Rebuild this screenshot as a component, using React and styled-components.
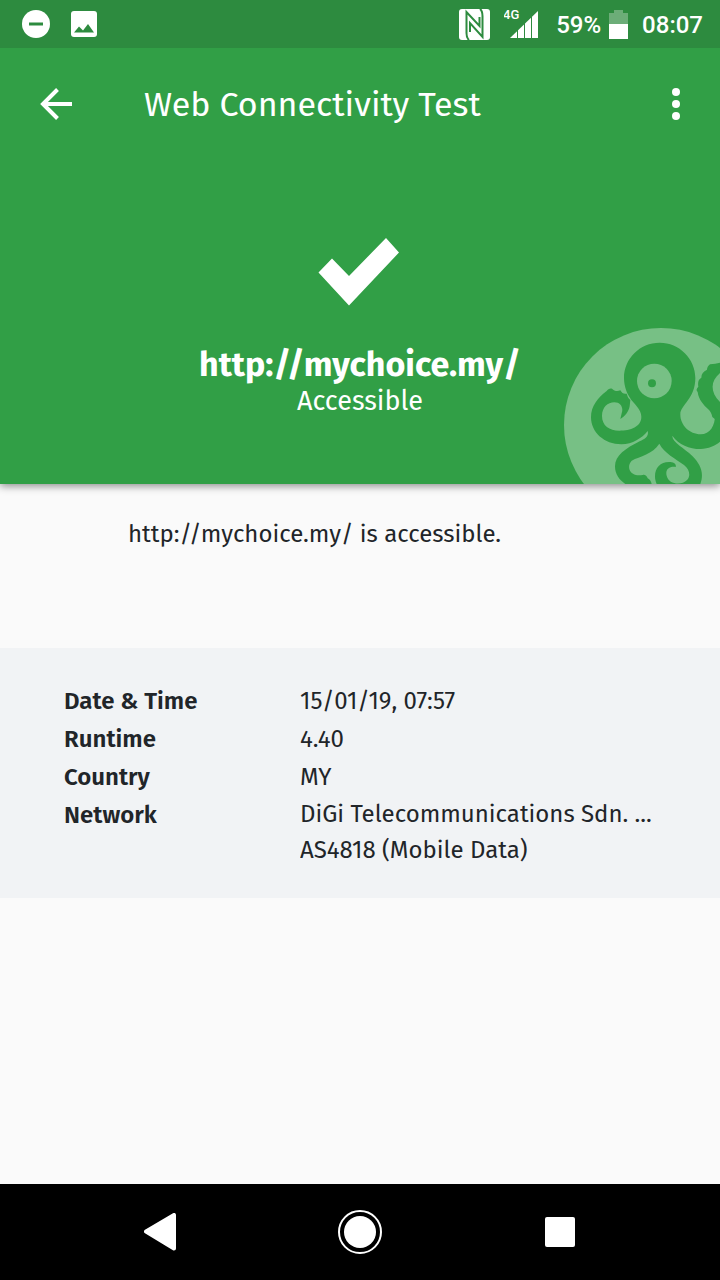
import React from 'react';
import styled, { createGlobalStyle } from 'styled-components';

const fira = "'Fira Sans', 'Noto Sans CJK SC', 'Noto Sans', sans-serif";

const GlobalStyle = createGlobalStyle`
  * { box-sizing: border-box; }
  body { margin: 0; background: #fafafa; }
`;

const Screen = styled.div`
  min-height: 100vh;
  display: flex;
  flex-direction: column;
  background: #fafafa;
  color: #212529;
  font-family: ${fira};
`;

const StatusBar = styled.div`
  position: relative;
  z-index: 1;
  height: 48px;
  padding: 0 17px 0 20px;
  display: flex;
  align-items: center;
  justify-content: space-between;
  background: #2d8b3f;
  color: #fff;
  font: 500 24px/32px Roboto, sans-serif;
`;

const StatusGroup = styled.div`
  display: flex;
  align-items: center;
  gap: ${({ $gap }) => $gap}px;
`;

const StatusText = styled.span`
  padding-top: 2px;
`;

const Signal = styled.svg`
  font: 500 13px Roboto, sans-serif;
`;

const Hero = styled.header`
  position: relative;
  overflow: hidden;
  height: 436px;
  background: #319f46;
  color: #fff;
`;

const HeroShadow = styled.div`
  box-shadow: 0 2px 8px rgba(0, 0, 0, 0.45);
`;

const Toolbar = styled.div`
  height: 112px;
  padding: 0 20px 0 32px;
  display: flex;
  align-items: center;
`;

const IconButton = styled.button`
  display: flex;
  align-items: center;
  justify-content: center;
  width: 48px;
  height: 48px;
  padding: 0;
  border: 0;
  background: none;
  color: inherit;
`;

const Title = styled.h1`
  flex: 1;
  margin: 0 0 0 64px;
  padding-top: 2px;
  font-size: 34px;
  line-height: 48px;
  font-weight: 400;
`;

const Result = styled.div`
  padding-top: 72px;
  display: flex;
  flex-direction: column;
  align-items: center;
`;

const ResultUrl = styled.div`
  margin-top: 39px;
  font-size: 34px;
  line-height: 40px;
  font-weight: 700;
`;

const ResultState = styled.div`
  font-size: 27px;
  line-height: 32px;
`;

const Mascot = styled.svg`
  position: absolute;
  right: 0;
  bottom: 0;
`;

const Summary = styled.p`
  margin: 0;
  height: 164px;
  padding: 32px 128px 0;
  font-size: 24px;
  line-height: 36px;
`;

const Details = styled.dl`
  margin: 0;
  padding: 34px 64px 30px;
  background: #f1f3f5;
  font-size: 24px;
  line-height: 38px;
`;

const DetailRow = styled.div`
  display: grid;
  grid-template-columns: 236px minmax(0, 1fr);
`;

const DetailLabel = styled.dt`
  font-weight: 600;
`;

const DetailValue = styled.dd`
  margin: 0;
  line-height: ${({ $compact }) => ($compact ? 36 : 38)}px;
`;

const DetailLine = styled.div`
  overflow: hidden;
  white-space: nowrap;
  text-overflow: ellipsis;
`;

const NavBar = styled.nav`
  margin-top: auto;
  height: 96px;
  padding: 0 60px;
  display: grid;
  grid-template-columns: repeat(3, 1fr);
  align-items: center;
  justify-items: center;
  background: #000;
  color: #fff;
`;

const Octopus = () => (
  <Mascot width="156" height="156" viewBox="72 54 468 468" aria-hidden="true">
    <circle cx="363" cy="345" r="291" fill="#77c085" />
    <g fill="#319f46">
      <path d="M359 98C299 98 252 146 252 204C252 231 262 256 280 277C295 294 304 305 304 321C304 350 272 362 238 362C208 362 186 347 186 318C186 292 203 277 223 277C243 277 251 294 245 310L241 327C256 318 266 305 269 289L271 270C265 265 263 260 260 251C252 253 246 250 241 241C231 245 223 243 216 236C209 234 204 238 200 243C174 263 153 288 153 322C153 367 193 403 244 403C278 402 305 385 323 363C327 377 317 386 299 394C257 415 225 437 225 469C225 493 238 510 256 522H335C333 514 330 508 323 505C320 498 315 493 308 495C297 497 286 496 279 491C264 483 264 463 275 452C300 438 338 433 358 401C373 430 407 446 432 465C450 479 452 499 441 510C425 527 386 524 380 497C375 479 388 468 407 471C410 462 401 456 387 456C361 456 345 473 345 499C345 508 347 515 350 522H481C493 489 482 463 457 438C432 413 396 397 397 377C417 404 447 417 482 417C505 416 526 407 540 395V326L525 308C527 344 512 373 482 373C448 373 420 345 421 312C422 285 466 266 466 204C466 146 418 98 359 98Z" />
      <path d="M540 158C530 161 522 161 510 163C504 168 501 173 501 179C490 184 484 191 484 203C476 208 473 215 475 230C469 236 468 241 473 246C476 270 492 286 504 297C512 303 515 312 517 321L540 340V276C510 246 511 213 540 189Z" />
    </g>
    <circle cx="343" cy="213" r="52" fill="#77c085" />
    <circle cx="336" cy="220" r="12" fill="#319f46" />
  </Mascot>
);

const details = [
  { label: 'Date & Time', lines: ['15/01/19, 07:57'] },
  { label: 'Runtime', lines: ['4.40'] },
  { label: 'Country', lines: ['MY'] },
  { label: 'Network', lines: ['DiGi Telecommunications Sdn. ...', 'AS4818 (Mobile Data)'] },
];

export default function App() {
  return (
    <Screen>
      <GlobalStyle />
      <StatusBar>
        <StatusGroup $gap={16}>
          <svg width="32" height="32" viewBox="0 0 32 32" aria-hidden="true">
            <circle cx="16" cy="16" r="14" fill="#fff" />
            <path d="M9 14.5h14v3H9z" fill="#2d8b3f" />
          </svg>
          <svg width="32" height="32" viewBox="0 0 32 32" aria-hidden="true">
            <rect x="3" y="3" width="26" height="26" rx="3" fill="#fff" />
            <path d="M6 24.500l5-6 4 4 5-6.500 6 8.500z" fill="#2d8b3f" />
          </svg>
        </StatusGroup>
        <StatusGroup $gap={14}>
          <svg width="31" height="32" viewBox="0 0 31 32" aria-hidden="true">
            <rect y="1" width="31" height="31" rx="3" fill="#fff" />
            <path d="M10 32C7.500 30 7.500 28 7.500 25V4L20.500 18V9M21 1C23.500 3 23.500 5 23.500 8V29L11 15V24" fill="none" stroke="#2d8b3f" strokeWidth="2" />
          </svg>
          <Signal width="38" height="32" viewBox="0 0 38 32" aria-hidden="true">
            <path d="M6 30L34 3V30z" fill="#fff" />
            <path d="M13.500 20V30M20.500 14V30M27.500 8V30" stroke="#2d8b3f" strokeWidth="1" />
            <text x="-1" y="11" fill="#fff">4G</text>
          </Signal>
          <StatusGroup $gap={8}>
            <StatusText>59%</StatusText>
            <svg width="19" height="29" viewBox="0 0 19 29" aria-hidden="true">
              <path d="M0 14V3h5V0h9v3h5v11z" fill="#6cad78" />
              <path d="M0 14h19v15H0z" fill="#fff" />
            </svg>
          </StatusGroup>
          <StatusText>08:07</StatusText>
        </StatusGroup>
      </StatusBar>
      <HeroShadow>
        <Hero>
          <Octopus />
          <Toolbar>
            <IconButton aria-label="Back">
              <svg width="32" height="32" viewBox="0 0 32 32" aria-hidden="true">
                <path d="M32 16H3M17.500 1.500L3 16l14.500 14.500" fill="none" stroke="#fff" strokeWidth="4" />
              </svg>
            </IconButton>
            <Title>Web Connectivity Test</Title>
            <IconButton aria-label="More options">
              <svg width="8" height="32" viewBox="0 0 8 32" fill="#fff" aria-hidden="true">
                <circle cx="4" cy="4" r="4" />
                <circle cx="4" cy="16" r="4" />
                <circle cx="4" cy="28" r="4" />
              </svg>
            </IconButton>
          </Toolbar>
          <Result>
            <svg width="84" height="74" viewBox="0 0 84 74" aria-hidden="true">
              <path d="M0.500 40.500L14 26.500L31 44L68 6L81 20.500L31 73.500z" fill="#fff" />
            </svg>
            <ResultUrl>http://mychoice.my/</ResultUrl>
            <ResultState>Accessible</ResultState>
          </Result>
        </Hero>
      </HeroShadow>
      <Summary>http://mychoice.my/ is accessible.</Summary>
      <Details>
        {details.map(({ label, lines }) => (
          <DetailRow key={label}>
            <DetailLabel>{label}</DetailLabel>
            <DetailValue $compact={lines.length > 1}>
              {lines.map((line) => (
                <DetailLine key={line}>{line}</DetailLine>
              ))}
            </DetailValue>
          </DetailRow>
        ))}
      </Details>
      <NavBar>
        <IconButton aria-label="Back">
          <svg width="32" height="38" viewBox="0 0 32 38" aria-hidden="true">
            <path d="M2 18.500L30 2V35.500z" fill="#fff" stroke="#fff" strokeWidth="4" strokeLinejoin="round" />
          </svg>
        </IconButton>
        <IconButton aria-label="Home">
          <svg width="44" height="44" viewBox="0 0 44 44" aria-hidden="true">
            <circle cx="22" cy="22" r="21" fill="none" stroke="#fff" strokeWidth="2" />
            <circle cx="22" cy="22" r="16" fill="#fff" />
          </svg>
        </IconButton>
        <IconButton aria-label="Recent apps">
          <svg width="30" height="30" viewBox="0 0 30 30" aria-hidden="true">
            <rect width="30" height="30" rx="2" fill="#fff" />
          </svg>
        </IconButton>
      </NavBar>
    </Screen>
  );
}
